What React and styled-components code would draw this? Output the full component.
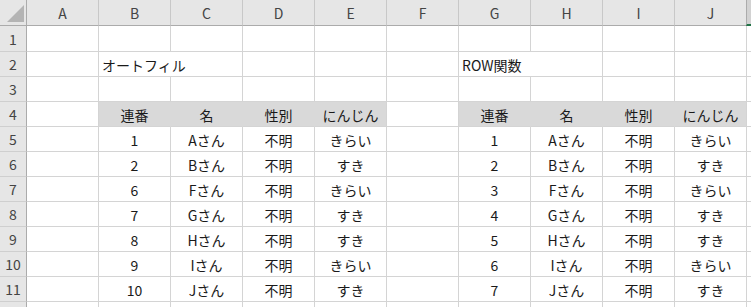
import styled, { createGlobalStyle } from "styled-components";

const GlobalStyle = createGlobalStyle`
  html, body {
    margin: 0;
    padding: 0;
    background: #ffffff;
    overflow: hidden;
  }
`;

// K and row 12 only peek in at the window's edge, so they carry no label
const COLS = ["A", "B", "C", "D", "E", "F", "G", "H", "I", "J", ""];
const HEAD = ["連番", "名", "性別", "にんじん"];
const PEOPLE = [
  ["Aさん", "きらい"],
  ["Bさん", "すき"],
  ["Fさん", "きらい"],
  ["Gさん", "すき"],
  ["Hさん", "すき"],
  ["Iさん", "きらい"],
  ["Jさん", "すき"],
];
const LEFT_NO = [1, 2, 6, 7, 8, 9, 10];

const Viewport = styled.div`
  width: 751px;
  height: 307px;
  overflow: hidden;
`;

const Sheet = styled.div`
  display: grid;
  grid-template-columns: 27px repeat(11, 72px);
  grid-template-rows: 26px 26px repeat(11, 25px);
  font-family: "Noto Sans CJK JP", "Noto Sans", sans-serif;
  font-size: 14px;
  color: #1a1a1a;
  background: #ffffff;
`;

const Corner = styled.div`
  box-sizing: border-box;
  background: #e6e6e6;
  border-right: 1px solid #ababab;
  border-bottom: 1px solid #ababab;
  padding: 5px 3px 3px 7px;

  svg {
    display: block;
  }
`;

const ColHead = styled.div`
  box-sizing: border-box;
  display: flex;
  align-items: center;
  justify-content: center;
  background: ${(p) => (p.$selected ? "#d2d2d2" : "#e6e6e6")};
  border-right: 1px solid ${(p) => (p.$selected ? "#d2d2d2" : "#c8c8c8")};
  border-left: ${(p) => (p.$selected ? "1px solid #ababab" : "none")};
  margin-left: ${(p) => (p.$selected ? "-1px" : "0")};
  border-bottom: ${(p) => (p.$selected ? "2px solid #217346" : "1px solid #ababab")};
  color: #444444;
  font-size: 14px;
  overflow: hidden;
`;

const RowHead = styled.div`
  box-sizing: border-box;
  display: flex;
  align-items: center;
  justify-content: center;
  background: #e6e6e6;
  border-right: 1px solid #ababab;
  border-bottom: 1px solid #cfcfcf;
  color: #444444;
  font-size: 14px;
`;

const Cell = styled.div`
  box-sizing: border-box;
  display: flex;
  align-items: center;
  justify-content: ${(p) => (p.$left ? "flex-start" : "center")};
  padding: 1px 3px 0;
  grid-column: ${(p) => (p.$span ? `span ${p.$span}` : "auto")};
  background: ${(p) => (p.$fill ? "#d9d9d9" : "transparent")};
  border-right: 1px solid ${(p) => (p.$joinRight ? "#d9d9d9" : "#d4d4d4")};
  border-bottom: 1px solid #d4d4d4;
  white-space: nowrap;
  overflow: hidden;
  line-height: 1;
`;

function rowCells(r) {
  // 11 cells (A..K) for sheet row r
  const blank = (key) => <Cell key={key} />;
  if (r === 2) {
    return [
      blank("a"),
      <Cell key="b" $left $span={2}>
        オートフィル
      </Cell>,
      blank("d"),
      blank("e"),
      blank("f"),
      <Cell key="g" $left $span={2}>
        ROW関数
      </Cell>,
      blank("i"),
      blank("j"),
      blank("k"),
    ];
  }
  if (r === 4) {
    const group = (side) =>
      HEAD.map((h, i) => (
        <Cell key={side + i} $fill $joinRight={i < 3}>
          {h}
        </Cell>
      ));
    return [blank("a"), ...group("l"), blank("f"), ...group("r"), blank("k")];
  }
  if (r >= 5 && r <= 11) {
    const i = r - 5;
    const [name, carrot] = PEOPLE[i];
    const group = (side, no) => [
      <Cell key={side + "n"}>{no}</Cell>,
      <Cell key={side + "m"}>{name}</Cell>,
      <Cell key={side + "s"}>不明</Cell>,
      <Cell key={side + "c"}>{carrot}</Cell>,
    ];
    return [
      blank("a"),
      ...group("l", LEFT_NO[i]),
      blank("f"),
      ...group("r", i + 1),
      blank("k"),
    ];
  }
  return COLS.map((_, i) => blank(i));
}

function App() {
  const rows = Array.from({ length: 12 }, (_, i) => i + 1);
  return (
    <>
      <GlobalStyle />
      <Viewport>
        <Sheet>
          <Corner>
            <svg width="17" height="17" viewBox="0 0 17 17">
              <polygon points="17,0 17,17 0,17" fill="#b4b4b4" />
            </svg>
          </Corner>
          {COLS.map((c, i) => (
            <ColHead key={i} $selected={c === ""}>
              {c}
            </ColHead>
          ))}
          {rows.map((r) => [
            <RowHead key={"h" + r}>{r < 12 ? r : ""}</RowHead>,
            ...rowCells(r).map((cell, i) => ({ ...cell, key: r + "-" + i })),
          ])}
        </Sheet>
      </Viewport>
    </>
  );
}

export default App;
